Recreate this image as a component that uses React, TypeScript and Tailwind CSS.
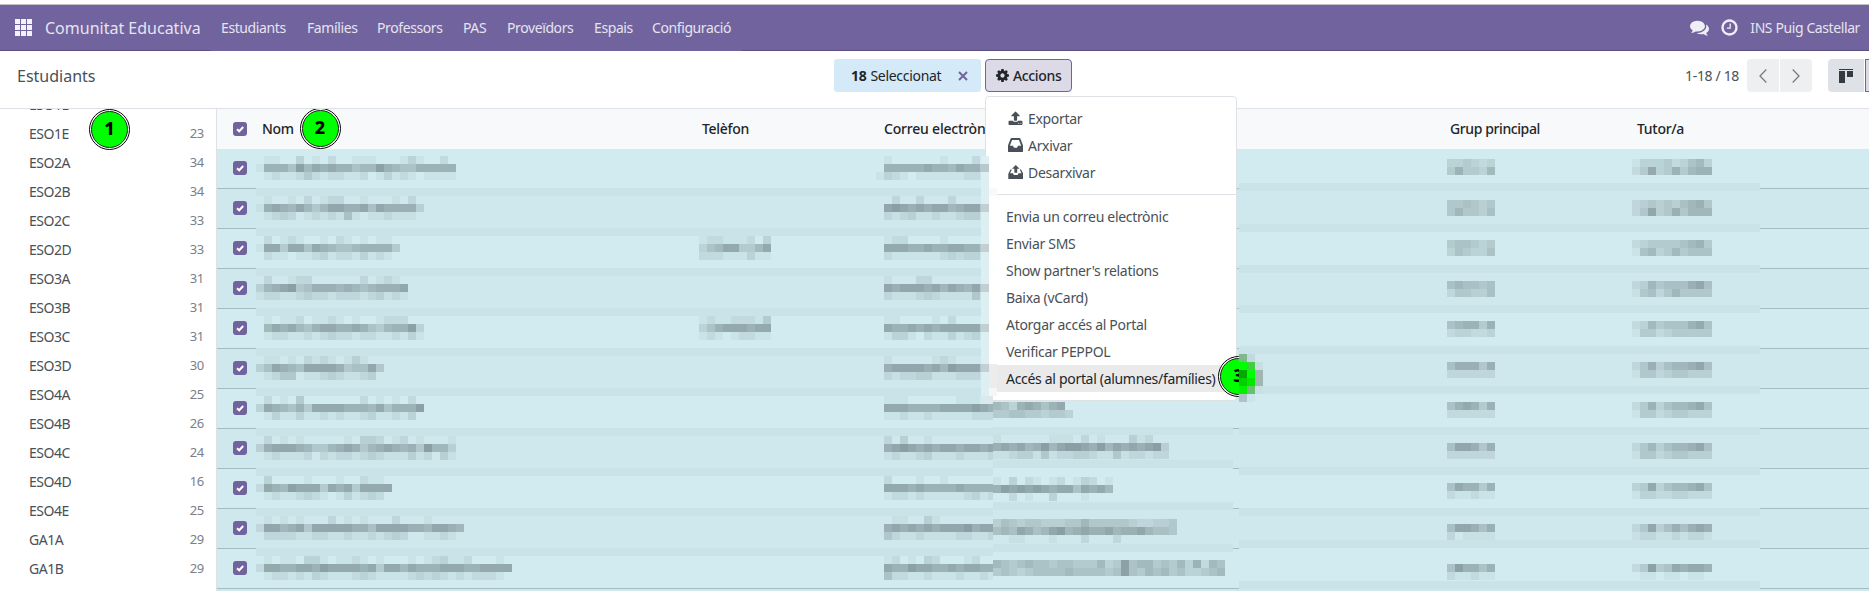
import type { ReactNode } from "react";

type Fila = {
   nom: string[];
   telefon?: string[];
   correu: string[];
   grup: string[];
   tutor: string[];
   // second redacted block of the e-mail, after the menu edge
   extra?: { y: number; tiles: string[] };
   midBand?: number;
   bandY: number;
   sideY: number;
};

const NAV = [
   { label: "Estudiants", width: "w-[86px]" },
   { label: "Famílies", width: "w-[70px]" },
   { label: "Professors", width: "w-[86px]" },
   { label: "PAS", width: "w-[44px]" },
   { label: "Proveïdors", width: "w-[87px]" },
   { label: "Espais", width: "w-[58px]" },
   { label: "Configuració", width: "w-[90px]" },
];

const GRUPS: [string, number][] = [
   ["ESO1D", 23],
   ["ESO1E", 23],
   ["ESO2A", 34],
   ["ESO2B", 34],
   ["ESO2C", 33],
   ["ESO2D", 33],
   ["ESO3A", 31],
   ["ESO3B", 31],
   ["ESO3C", 31],
   ["ESO3D", 30],
   ["ESO4A", 25],
   ["ESO4B", 26],
   ["ESO4C", 24],
   ["ESO4D", 16],
   ["ESO4E", 25],
   ["GA1A", 29],
   ["GA1B", 29],
];

const ACCIONS = [
   "Envia un correu electrònic",
   "Enviar SMS",
   "Show partner's relations",
   "Baixa (vCard)",
   "Atorgar accés al Portal",
   "Verificar PEPPOL",
];

// Each digit is the darkness of one 8px tile
const FILES: Fila[] = [
   {
      nom: ["0110030102001110001310020", "1777596878775669765577777", "0121124212211201312101111"],
      correu: ["010000001000200", "077777877687744", "132101111112210"],
      grup: ["334323", "474436"],
      tutor: ["1333423563", "2483474677"],
      bandY: 0,
      sideY: 11,
   },
   {
      nom: ["010010201220010001020", "178768646887785877773", "012320121215101121110"],
      correu: ["002002000200000", "089878788678844", "021231121123310"],
      grup: ["445434", "464435"],
      tutor: ["2343435674", "2483474666"],
      bandY: -5,
      sideY: 12,
   },
   {
      nom: ["020121001021010110", "188488587655677774", "021101123122131210"],
      telefon: ["122111203", "356884468", "222111311"],
      correu: ["012200001000000", "088877877887744", "021111112323310"],
      grup: ["455434", "354335"],
      tutor: ["2344445674", "1563464555"],
      bandY: -4,
      sideY: 12,
   },
   {
      nom: ["0200122000000201210", "3678945777676567778", "1221123221222123121"],
      correu: ["010002200000000", "087888786876844", "021112321111410"],
      grup: ["565545", "244335"],
      tutor: ["2364555785", "1452464444"],
      bandY: -3,
      sideY: 13,
   },
   {
      nom: ["010112011210100122200", "068786578877875467793", "012211212322122112131"],
      telefon: ["121122214", "357888788", "121012211"],
      correu: ["011000010200000", "087787878888844", "013310211312310"],
      grup: ["567747", "233223"],
      tutor: ["2364555785", "1442344444"],
      bandY: -3,
      sideY: 13,
   },
   {
      nom: ["0110102121013100", "3587658888745584", "0124401123211230"],
      correu: ["010000012100000", "078888786988844", "021223311122210"],
      grup: ["577747", "222222"],
      tutor: ["2473566785", "1442344333"],
      bandY: -2,
      sideY: 14,
   },
   {
      nom: ["020104000000020101020", "387657488887776857779", "013113112121123112130"],
      correu: ["011100000011100", "088877778888987", "011211211111222"],
      extra: { y: 14, tiles: ["6537875780", "4455443443"] },
      grup: ["578747", "222222"],
      tutor: ["2473566785", "1442344333"],
      bandY: -2,
      sideY: 14,
   },
   {
      nom: [
         "0201010000010332012010001",
         "3788876446787467876749663",
         "0121112021221232111312031",
      ],
      correu: ["020300100000000", "078987878878878", "012112311121112"],
      extra: {
         y: 7,
         tiles: ["1000000111020100031200", "7878679689987968787893", "1123314122332114122122"],
      },
      midBand: -1,
      grup: ["588747", "222222"],
      tutor: ["2463566785", "1442344333"],
      bandY: -1,
      sideY: 15,
   },
   {
      nom: ["03000010001002110", "28769888487848888", "01211232101312320"],
      correu: ["020001001000000", "088878777787777", "012212111112312"],
      extra: { y: 9, tiles: ["103021012013201", "798989878858786", "002010030001000"] },
      midBand: -8,
      grup: ["587747", "211211"],
      tutor: ["3483566785", "1332233222"],
      bandY: -1,
      sideY: 15,
   },
   {
      nom: ["01010100020101000200010000", "28867848888877588887768876", "02222112211211212320011210"],
      correu: ["001100310000000", "078787878889788", "042112111122112"],
      extra: {
         y: 11,
         tiles: ["35434433344644444322334", "56587568967877867786554", "00110001000200020000000"],
      },
      midBand: -6,
      grup: ["588757", "201111"],
      tutor: ["2483575787", "1221121221"],
      bandY: 0,
      sideY: 16,
   },
   {
      nom: ["01011033101121010001012311200010", "28877887988887848868777888778888", "01221213211123211112323212122210"],
      correu: ["012010320001200", "087798877878877", "052211211121121"],
      extra: {
         y: 12,
         tiles: ["65456554554446349566454637265", "45434555565555459546564533456"],
      },
      midBand: -4,
      grup: ["597757", "211211"],
      tutor: ["2494587887", "0110110110"],
      bandY: -8,
      sideY: 16,
   },
];

const FA = {
   comments:
      "M1408 768q0 139-94 257t-256.500 186.500-353.500 68.500q-86 0-176-16-124 88-278 128-36 9-86 16h-3q-11 0-20.500-8t-11.500-21q-1-3-1-6.500t.5-6.500 2-6l2.500-5 3.500-5.500 4-5 4.500-5 4-4.500q5-6 23-25t26-29.500 22.500-29 25-38.500 20.500-44q-124-72-195-177t-71-224q0-139 94-257t256.500-186.500 353.500-68.500 353.500 68.500 256.500 186.500 94 257zm384 256q0 120-71 224.500t-195 176.500q10 24 20.500 44t25 38.500 22.500 29 26 29.500 23 25q1 1 4 4.500t4.500 5 4 5 3.500 5.500l2.500 5 2 6 .5 6.500-1 6.500q-3 14-13 22t-22 7q-50-7-86-16-154-40-278-128-90 16-176 16-271 0-472-132 58 4 88 4 161 0 309-45t264-129q125-92 192-212t67-254q0-77-23-152 129 71 204 178t75 230z",
   clock:
      "M1024 544v448q0 14-9 23t-23 9h-320q-14 0-23-9t-9-23v-64q0-14 9-23t23-9h224v-352q0-14 9-23t23-9h64q14 0 23 9t9 23zm416 352q0-148-73-273t-198-198-273-73-273 73-198 198-73 273 73 273 198 198 273 73 273-73 198-198 73-273zm224 0q0 209-103 385.500t-279.500 279.500-385.500 103-385.500-103-279.500-279.500-103-385.500 103-385.500 279.500-279.500 385.500-103 385.500 103 279.500 279.500 103 385.500z",
   cog: "M1152 896q0-106-75-181t-181-75-181 75-75 181 75 181 181 75 181-75 75-181zm512-109v222q0 12-8 23t-20 13l-185 28q-19 54-39 91 35 50 107 138 10 12 10 25t-9 23q-27 37-99 108t-94 71q-12 0-26-9l-138-108q-44 23-91 38-16 136-29 186-7 28-36 28h-222q-14 0-24.500-8.500t-11.500-21.500l-28-184q-49-16-90-37l-141 107q-10 9-25 9-14 0-25-11-126-114-165-168-7-10-7-23 0-12 8-23 15-21 51-66.500t54-70.500q-27-50-41-99l-183-27q-13-2-21-12.500t-8-23.500v-222q0-12 8-23t19-13l186-28q14-46 39-92-40-57-107-138-10-12-10-24 0-10 9-23 26-36 98.500-107.500t94.500-71.500q13 0 26 10l138 107q44-23 91-38 16-136 29-186 7-28 36-28h222q14 0 24.500 8.500t11.500 21.500l28 184q49 16 90 37l142-107q9-9 24-9 13 0 25 10 129 119 165 170 7 8 7 22 0 12-8 23-15 21-51 66.500t-54 70.500q26 50 41 98l183 28q13 2 21 12.500t8 23.500z",
   upload:
      "M1344 1472q0-26-19-45t-45-19-45 19-19 45 19 45 45 19 45-19 19-45zm256 0q0-26-19-45t-45-19-45 19-19 45 19 45 45 19 45-19 19-45zm128-224v320q0 40-28 68t-68 28h-1472q-40 0-68-28t-28-68v-320q0-40 28-68t68-28h427q21 56 70.500 92t110.500 36h256q61 0 110.500-36t70.500-92h427q40 0 68 28t28 68zm-325-648q-17 40-59 40h-256v448q0 26-19 45t-45 19h-256q-26 0-45-19t-19-45v-448h-256q-42 0-59-40-17-39 14-69l448-448q18-19 45-19t45 19l448 448q31 30 14 69z",
   inbox:
      "M1151 960h316q-1-3-2.500-8.500t-2.500-7.500l-212-496h-708l-212 496q-1 3-2.500 8.500t-2.500 7.500h316l95 192h320zm513 30v482q0 26-19 45t-45 19h-1408q-26 0-45-19t-19-45v-482q0-62 25-123l238-552q10-25 36.500-42t52.500-17h832q26 0 52.500 17t36.500 42l238 552q25 61 25 123z",
   unarchive:
      "M896 60l400 420h-250v420h-300v-420h-250zM480 560l-190 400h310l95 192h400l95-192h310l-190-400h150l210 440q20 50 20 110v430q0 60-60 60h-1468q-60 0-60-60v-430q0-60 20-110l210-440z",
};

function FaIcon({
   d,
   className,
   viewBox = "0 0 1792 1792",
}: {
   d: string;
   className: string;
   viewBox?: string;
}) {
   return (
      <svg viewBox={viewBox} preserveAspectRatio="none" fill="currentColor" className={className}>
         <path d={d} />
      </svg>
   );
}

function Tiles({ x, y, rows }: { x: number; y: number; rows: string[] }) {
   return (
      <g fill="#36474a">
         {rows.map((row, r) =>
            row.split("").map((n, c) =>
               n === "0" ? null : (
                  <rect
                     key={`${r}-${c}`}
                     x={x + c * 8}
                     y={y + r * 8}
                     width={8}
                     height={8}
                     fillOpacity={Number(n) * 0.05}
                  />
               )
            )
         )}
      </g>
   );
}

function Check() {
   return (
      <span className="flex size-[14px] items-center justify-center rounded-[3px] bg-[#71639e]">
         <svg viewBox="0 0 14 14" className="size-[14px]" fill="none" stroke="#fff" strokeWidth="2">
            <path d="M4 7.2l2.2 2.1L10.2 5" />
         </svg>
      </span>
   );
}

function Marcador({ n }: { n: number }) {
   return (
      <div className="flex size-[41px] items-center justify-center rounded-full border border-black bg-white p-px">
         <div className="flex size-full items-center justify-center rounded-full border-[1.5px] border-[#222] bg-[#00ff00] pb-[3px] text-[18px] font-extrabold text-black">
            {n}
         </div>
      </div>
   );
}

function TaulaFila({ fila, index }: { fila: Fila; index: number }) {
   const band = "#cae3e8";
   const fons = index % 2 ? "#cfe8ed" : "#d2ebf0";
   return (
      <div
         className={`flex h-10 shrink-0 border-t ${index === 0 ? "border-[#f8f9fa]" : "border-[#a3bbc1]"} ${
            index % 2 ? "bg-[#cfe8ed]" : "bg-[#d2ebf0]"
         }`}
      >
         <div className="w-[39px] shrink-0 pt-3 pl-4">
            <Check />
         </div>
         <svg className="-mt-px h-10 w-[737px] shrink-0" shapeRendering="crispEdges">
            {index > 0 && <rect width={737} height={8} fill={band} />}
            <Tiles x={0} y={8} rows={fila.nom} />
            {fila.telefon && <Tiles x={443} y={8} rows={fila.telefon} />}
            <Tiles x={620} y={8} rows={fila.correu} />
         </svg>
         <svg className="-mt-px h-10 w-[240px] shrink-0 overflow-visible" shapeRendering="crispEdges">
            {index > 0 && <rect width={240} height={1} fill={fons} />}
            {fila.midBand !== undefined && <rect y={fila.midBand} width={240} height={8} fill={band} />}
            {fila.extra && <Tiles x={0} y={fila.extra.y} rows={fila.extra.tiles} />}
         </svg>
         <div className="w-[6px] shrink-0" />
         <svg className="-mt-px h-10 w-[521px] shrink-0 overflow-visible" shapeRendering="crispEdges">
            {index > 0 && (
               <>
                  <rect width={521} height={1} fill={fons} />
                  <rect y={fila.bandY} width={521} height={8} fill={band} />
               </>
            )}
            <Tiles x={208} y={fila.sideY} rows={fila.grup} />
            <Tiles x={393} y={fila.sideY} rows={fila.tutor} />
         </svg>
         <div className="grow" />
      </div>
   );
}

function MenuItem({ children, actiu }: { children: ReactNode; actiu?: boolean }) {
   return (
      <div
         className={`flex h-[27px] items-center pb-px pl-5 whitespace-nowrap ${
            actiu ? "bg-[#eaeaeb] text-[#212529]" : ""
         }`}
      >
         {children}
      </div>
   );
}

function MenuAccions() {
   return (
      <div className="absolute top-[37px] left-0 z-20 h-[305px] w-[252px] rounded-[4px] border border-[#dee2e6] bg-white pt-2 text-[14px] tracking-[-0.31px] text-[#495057]">
         <MenuItem>
            <FaIcon d={FA.upload} className="mr-[5px] ml-[2px] size-[15px]" />
            Exportar
         </MenuItem>
         <MenuItem>
            <FaIcon
               d={FA.inbox}
               viewBox="128 256 1536 1280"
               className="mr-[5px] ml-[2px] h-[14px] w-[15px]"
            />
            Arxivar
         </MenuItem>
         <MenuItem>
            <FaIcon
               d={FA.unarchive}
               viewBox="72 60 1588 1540"
               className="mr-[5px] ml-[2px] h-[14px] w-[15px]"
            />
            Desarxivar
         </MenuItem>
         <div className="my-2 ml-[11px] border-t border-[#dee2e6]" />
         {ACCIONS.map((a) => (
            <MenuItem key={a}>{a}</MenuItem>
         ))}
         <MenuItem actiu>Accés al portal (alumnes/famílies)</MenuItem>

         {/* redacted strip along the left edge of the menu */}
         <svg
            className="absolute top-[59px] -left-[5px] h-[248px] w-4"
            shapeRendering="crispEdges"
         >
            <rect width={8} height={240} fill="#deeff3" />
            <rect y={8} width={8} height={8} fill="#b7c9cd" />
            {[48, 88, 128, 168, 208].map((y) => (
               <rect key={y} y={y} width={8} height={8} fill="#c3d0d3" />
            ))}
            <rect x={8} y={32} width={8} height={8} fill="#f7fafa" />
            <rect x={8} y={208} width={8} height={24} fill="#ececec" />
            <rect x={8} y={232} width={8} height={8} fill="#f6f6f6" />
            <rect y={240} width={12} height={8} fill="#dce9ec" />
         </svg>

         <div className="absolute top-[259px] left-[232px] w-[21px] overflow-hidden tracking-normal">
            <div className="w-[41px]">
               <Marcador n={3} />
            </div>
         </div>
         <svg className="absolute top-[257px] left-[253px] h-12 w-6" shapeRendering="crispEdges">
            <rect width={8} height={8} fill="#80b78f" />
            <rect x={8} width={8} height={8} fill="#c0dade" />
            <rect y={8} width={8} height={8} fill="#00ff00" />
            <rect x={8} y={8} width={8} height={8} fill="#45cc45" />
            <rect x={16} y={8} width={8} height={8} fill="#c5dee2" />
            <rect y={16} width={8} height={8} fill="#00aa00" />
            <rect x={8} y={16} width={8} height={8} fill="#00ff00" />
            <rect x={16} y={16} width={8} height={16} fill="#a0b6b2" />
            <rect y={24} width={8} height={8} fill="#00cf00" />
            <rect x={8} y={24} width={8} height={8} fill="#00ea00" />
            <rect y={32} width={8} height={8} fill="#00f000" />
            <rect x={8} y={32} width={8} height={8} fill="#6ac070" />
            <rect x={16} y={32} width={8} height={8} fill="#c7e0e4" />
            <rect y={40} width={8} height={8} fill="#aec3c7" />
            <rect x={8} y={40} width={8} height={8} fill="#cce5ea" />
         </svg>
      </div>
   );
}

export default function App() {
   return (
      <div className="flex h-[591px] w-[1869px] flex-col overflow-hidden bg-white font-['Noto_Sans',sans-serif] text-[14px] leading-[21px] text-[#495057]">
         <div className="h-[5px] shrink-0 border-b border-[#c4c0c6]" />
         <nav className="flex h-[46px] shrink-0 bg-[#71639e] text-[#e6e3ef]">
            <div className="flex w-[211px] items-center border-b border-[#5a4f7f] pb-[1px] pl-[15px]">
               <svg viewBox="0 0 17 17" className="size-[17px] shrink-0" fill="#f3f2f7">
                  {[0, 6, 12].map((y) =>
                     [0, 6, 12].map((x) => <rect key={`${x}-${y}`} x={x} y={y} width={5} height={5} />)
                  )}
               </svg>
               <span className="ml-[13px] pt-[2px] text-[16px] whitespace-nowrap">
                  Comunitat Educativa
               </span>
            </div>
            <div className="flex w-[531px] items-center pb-[1px] pl-[10px] tracking-[-0.4px]">
               {NAV.map((n) => (
                  <span key={n.label} className={`shrink-0 ${n.width}`}>
                     {n.label}
                  </span>
               ))}
            </div>
            <div className="flex grow items-center justify-end border-b border-[#5a4f7f] pr-[9px] pb-[1px]">
               <FaIcon d={FA.comments} className="mr-[11px] size-[19px] text-[#f0eef5]" />
               <FaIcon d={FA.clock} className="mr-[11px] size-[19px] text-[#f0eef5]" />
               <span className="tracking-[-0.4px]">INS Puig Castellar</span>
            </div>
         </nav>

         <header className="flex h-[58px] shrink-0 border-b border-[#dee2e6] pt-2">
            <h1 className="w-[834px] shrink-0 pt-[7px] pl-[17px] text-[16px]">Estudiants</h1>
            <div className="flex h-[33px] w-[147px] items-center rounded-[3px] bg-[#d4eaf8] pl-[17px] tracking-[-0.3px] text-[#212529]">
               <b className="mr-1">18</b>Seleccionat
               <svg viewBox="0 0 10 10" className="mr-[13px] ml-auto size-[10px]" stroke="#71639e" strokeWidth="2">
                  <path d="M1 1l8 8M9 1l-8 8" />
               </svg>
            </div>
            <div className="relative ml-1 h-[33px] w-[87px]">
               <button className="flex h-full w-full items-center rounded-[4px] border border-[#71639e] bg-[#dddae7] pl-[9px] font-medium tracking-[-0.35px] text-[#212529]">
                  <FaIcon d={FA.cog} className="mr-[3px] size-[15px]" />
                  Accions
               </button>
               <MenuAccions />
            </div>
            <div className="ml-auto flex h-[33px] items-center">
               <span className="mr-2 tracking-[-0.35px]">1-18 / 18</span>
               <div className="flex h-[33px] gap-px text-[#777c81]">
                  <button className="flex w-8 items-center justify-center rounded-l-[4px] bg-[#eeeff1]">
                     <svg viewBox="0 0 8 14" className="h-[14px] w-2" fill="none" stroke="currentColor" strokeWidth="1.3">
                        <path d="M7.3.5L1 7l6.3 6.5" />
                     </svg>
                  </button>
                  <button className="flex w-8 items-center justify-center rounded-r-[4px] bg-[#eeeff1]">
                     <svg viewBox="0 0 8 14" className="h-[14px] w-2" fill="none" stroke="currentColor" strokeWidth="1.3">
                        <path d="M.7.5L7 7 .7 13.5" />
                     </svg>
                  </button>
               </div>
               <button className="ml-4 flex h-[33px] w-9 items-center justify-center rounded-l-[4px] bg-[#dee2e6]">
                  <svg viewBox="0 0 14 14" className="size-[14px]" fill="#343a40" shapeRendering="crispEdges">
                     <path d="M0 0h14v1H0zM0 2h6v12H0zM8 2h6v6H8z" />
                  </svg>
               </button>
               <div className="ml-px h-[33px] w-1 border-y border-l border-[#71639e] bg-[#dddae7]" />
            </div>
         </header>

         <div className="flex min-h-0 grow">
            <aside className="relative w-[217px] shrink-0 overflow-hidden border-r border-[#dee2e6]">
               <ul className="-mt-[19px]">
                  {GRUPS.map(([nom, total]) => (
                     <li key={nom} className="flex h-[29px] items-center justify-between pr-3 pl-[29px]">
                        <span className="tracking-[-0.45px]">{nom}</span>
                        <span className="text-[13px] tracking-[-0.3px] text-[#7a8086]">{total}</span>
                     </li>
                  ))}
               </ul>
               <div className="absolute top-0 left-[89px]">
                  <Marcador n={1} />
               </div>
            </aside>

            <main className="flex min-w-0 grow flex-col overflow-hidden bg-[#cfe8ed]">
               <div className="relative z-10 flex h-[39px] shrink-0 items-center bg-[#f8f9fa] font-medium tracking-[-0.3px] text-[#212529]">
                  <div className="flex w-[45px] shrink-0 pl-4">
                     <Check />
                  </div>
                  <span className="w-[440px] shrink-0">Nom</span>
                  <span className="w-[182px] shrink-0">Telèfon</span>
                  <span className="w-[566px] shrink-0 tracking-[-0.2px]">Correu electrònic</span>
                  <span className="w-[187px] shrink-0 tracking-[-0.4px]">Grup principal</span>
                  <span>Tutor/a</span>
                  <div className="absolute -top-[1px] left-[82.5px] tracking-normal">
                     <Marcador n={2} />
                  </div>
               </div>
               <div className="flex flex-col">
                  {FILES.map((fila, i) => (
                     <TaulaFila key={i} fila={fila} index={i} />
                  ))}
                  <div className="flex h-[3px] shrink-0 border-t border-[#a3bbc1]">
                     <div className="w-[1022px] shrink-0" />
                     <svg className="-mt-px h-[3px] w-[521px] overflow-visible" shapeRendering="crispEdges">
                        <rect width={521} height={3} fill="#cfe8ed" />
                        <rect y={-7} width={521} height={8} fill="#cae3e8" />
                     </svg>
                  </div>
               </div>
            </main>
         </div>
      </div>
   );
}
